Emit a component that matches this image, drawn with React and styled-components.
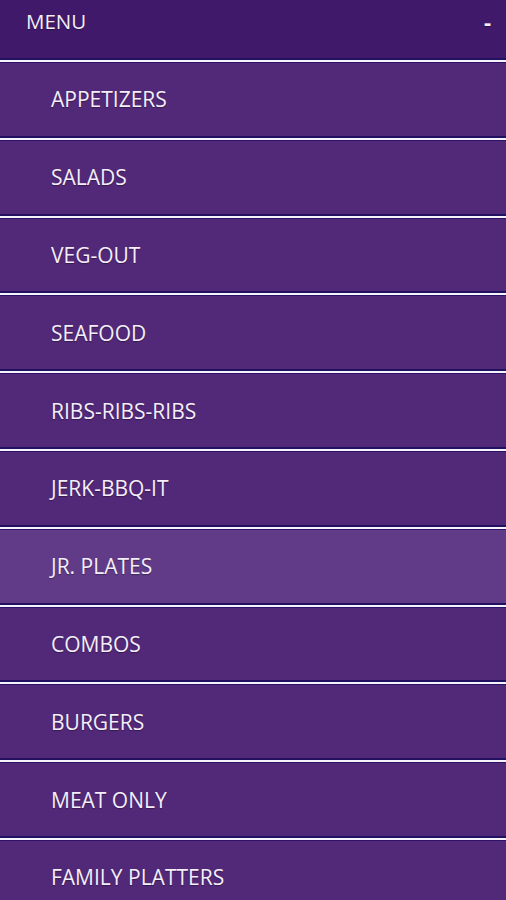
import styled, { createGlobalStyle } from 'styled-components';

const GlobalStyle = createGlobalStyle`
   html, body {
      margin: 0;
      padding: 0;
      background-color: #522878;
   }
   body {
      font-family: 'Open Sans', 'Noto Sans', sans-serif;
   }
`;

const Wrap = styled.div`
   width: 506px;
   height: 900px;
   overflow: hidden;
   background-color: #522878;
`;

const Header = styled.div`
   box-sizing: border-box;
   display: flex;
   align-items: center;
   justify-content: space-between;
   height: 58px;
   padding: 0 15px 16px 26px;
   background-color: #41196b;
   color: #f4eefa;
   font-size: 20.5px;
   text-shadow: 0 1px 1px rgba(0, 0, 0, 0.35);
`;

const Toggle = styled.span`
   font-size: 22px;
   font-weight: bold;
`;

const Separator = styled.div`
   height: 2px;
   background-color: #f6f2fb;
   border-top: 2px solid #221060;
   border-bottom: 1px solid #2e1168;
`;

const List = styled.ul`
   list-style: none;
   margin: 0;
   padding: 0;
`;

const Row = styled.li`
   display: block;
`;

const Item = styled.div`
   display: flex;
   align-items: center;
   height: 72.8px;
   padding-left: 51px;
   background-color: ${(p) => (p.$active ? '#613b87' : '#522878')};
   color: #f4eefa;
   font-size: 21px;
   text-shadow: 0 1px 1px rgba(0, 0, 0, 0.35);
`;

const items = [
   'APPETIZERS',
   'SALADS',
   'VEG-OUT',
   'SEAFOOD',
   'RIBS-RIBS-RIBS',
   'JERK-BBQ-IT',
   'JR. PLATES',
   'COMBOS',
   'BURGERS',
   'MEAT ONLY',
   'FAMILY PLATTERS',
];

const App = () => {
   return (
      <Wrap>
         <GlobalStyle />
         <Header>
            <span>MENU</span>
            <Toggle>-</Toggle>
         </Header>
         <List>
            {items.map((name) => (
               <Row key={name}>
                  <Separator />
                  <Item $active={name === 'JR. PLATES'}>{name}</Item>
               </Row>
            ))}
         </List>
      </Wrap>
   );
};

export default App;
